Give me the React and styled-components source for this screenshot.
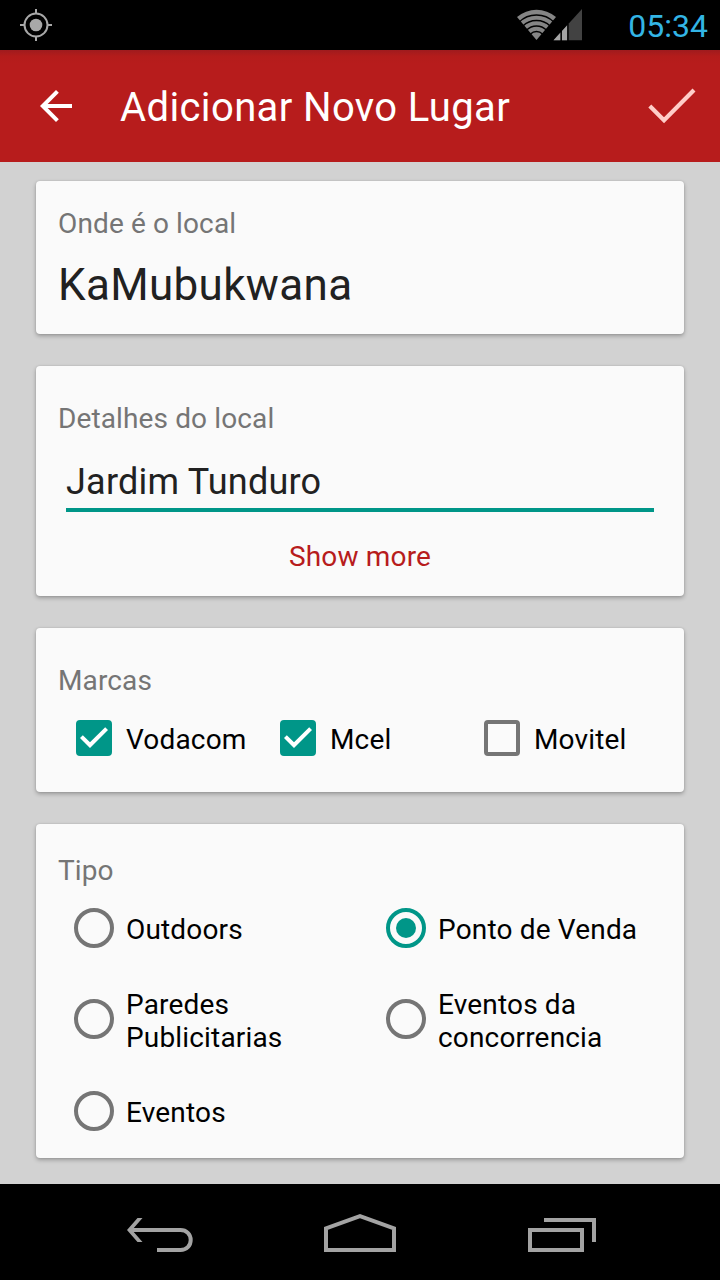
import React, { useState } from 'react';
import styled, { createGlobalStyle } from 'styled-components';

const GlobalStyle = createGlobalStyle`
  * { box-sizing: border-box; }
  body { margin: 0; background: #000; font-family: Roboto, "Liberation Sans", sans-serif; }
`;

const Screen = styled.div`
  width: 720px;
  height: 1280px;
  display: flex;
  flex-direction: column;
  overflow: hidden;
  background: #d2d2d2;
`;

const StatusBar = styled.header`
  height: 50px;
  flex: none;
  display: flex;
  align-items: flex-start;
  padding: 0 12px 0 18px;
  background: #000;
`;

const StatusIcons = styled.div`
  display: flex;
  margin-left: auto;
`;

const Clock = styled.time`
  width: 126px;
  padding-top: 7px;
  text-align: right;
  font-size: 32px;
  line-height: 38px;
  color: #33b5e5;
`;

const AppBar = styled.div`
  height: 112px;
  flex: none;
  display: flex;
  align-items: center;
  padding: 0 24px 0 32px;
  background: linear-gradient(#9f1b1e, #b31c1b 6px, #b71c1c 14px);
`;

const Title = styled.h1`
  flex: 1;
  margin: 2px 0 0 40px;
  font-size: 40px;
  font-weight: 400;
  line-height: 47px;
  letter-spacing: 0.38px;
  color: #fff;
`;

const IconButton = styled.button`
  display: flex;
  padding: 0;
  border: 0;
  background: none;
`;

const Content = styled.main`
  flex: 1;
  display: flex;
  flex-direction: column;
  gap: 32px;
  padding: 19px 36px 26px;
`;

const Card = styled.section`
  height: ${(p) => p.$height}px;
  flex: none;
  padding: ${(p) => p.$top}px 22px 0;
  border-radius: 4px;
  background: #fafafa;
  box-shadow: 0 2px 4px rgba(0, 0, 0, 0.28), 0 0 2px rgba(0, 0, 0, 0.12);
`;

const Label = styled.h2`
  margin: 0;
  font-size: 28px;
  font-weight: 400;
  line-height: 33px;
  letter-spacing: 0.12px;
  color: #757575;
`;

const PlaceName = styled.p`
  margin: 19px 0 0;
  font-size: 44px;
  line-height: 52px;
  letter-spacing: 0.34px;
  color: #212121;
`;

const TextField = styled.input`
  display: block;
  width: 588px;
  height: 54px;
  margin: 23px 8px 0;
  padding: 0 0 2px;
  border: 0;
  border-bottom: 4px solid #009688;
  border-radius: 0;
  outline: 0;
  background: none;
  font: 400 36px/42px Roboto, "Liberation Sans", sans-serif;
  letter-spacing: 0.22px;
  color: #212121;
`;

const MoreButton = styled.button`
  display: block;
  margin: 28px auto 0;
  padding: 0;
  border: 0;
  background: none;
  font: 400 28px/33px Roboto, "Liberation Sans", sans-serif;
  letter-spacing: 0.18px;
  color: #b71c1c;
`;

const CheckRow = styled.div`
  display: grid;
  grid-template-columns: repeat(3, 204px);
  margin: 23px -12px 0 18px;
`;

const Option = styled.label`
  display: flex;
  align-items: center;
  gap: ${(p) => p.$gap}px;
`;

const OptionText = styled.span`
  padding-top: ${(p) => p.$offset}px;
  font-size: 28px;
  line-height: 33px;
  letter-spacing: 0.17px;
  white-space: pre-line;
  color: #000;
`;

const CheckBox = styled.span`
  width: 36px;
  height: 36px;
  flex: none;
  border: 4px solid ${(p) => (p.$on ? '#009688' : '#757575')};
  border-radius: 4px;
  background: ${(p) => (p.$on ? '#009688' : 'transparent')};

  svg { display: block; margin: -4px; }
`;

const RadioGrid = styled.div`
  display: grid;
  grid-template-columns: 312px 270px;
  grid-template-rows: 80px 102px 82px;
  margin: 1px 0 0 16px;
`;

const Radio = styled.span`
  width: 40px;
  height: 40px;
  flex: none;
  display: grid;
  place-items: center;
  border: 4px solid ${(p) => (p.$on ? '#009688' : '#757575')};
  border-radius: 50%;
`;

const RadioDot = styled.span`
  width: 20px;
  height: 20px;
  border-radius: 50%;
  background: #009688;
`;

const NavBar = styled.nav`
  height: 96px;
  flex: none;
  display: flex;
  align-items: center;
  justify-content: space-between;
  padding: 8px 122px 0 124px;
  background: #000;
`;

const GpsIcon = () => (
  <svg width="36" height="50" viewBox="0 0 36 50" fill="none" stroke="#a8a8a8" strokeWidth="2">
    <circle cx="18" cy="25" r="11.5" />
    <path d="M18 9v5M18 36v5M2 25h5M29 25h5" />
    <circle cx="18" cy="25" r="6.3" fill="#a8a8a8" stroke="none" />
  </svg>
);

const WifiIcon = () => (
  <svg width="36" height="50" viewBox="516 0 36 50" overflow="visible">
    <path d="M536.5 40L517 17A30.2 30.2 0 0 1 556 17Z" fill="#858585" />
    <g fill="none" stroke="#000" strokeWidth="1.4">
      <path d="M518.9 22.3A25 25 0 0 1 554.1 22.3" />
      <path d="M522.7 26.2A19.5 19.5 0 0 1 550.3 26.2" />
      <path d="M526.6 30.1A14 14 0 0 1 546.4 30.1" />
      <path d="M530.5 34A8.5 8.5 0 0 1 542.5 34" />
    </g>
  </svg>
);

const SignalIcon = () => (
  <svg width="30" height="50" viewBox="552 0 30 50">
    <path d="M553.5 40.3L582 9v31.3Z" fill="#424242" />
    <path d="M553.5 40.3L560.5 32.6v7.7ZM562 31v9.3h5V25.5Z" fill="#a6a6a6" />
    <path d="M561.2 30v11M568 24v17" stroke="#000" strokeWidth="1.3" />
  </svg>
);

const BackArrow = () => (
  <svg width="48" height="48" viewBox="0 0 24 24" fill="#fff">
    <path d="M20 11H7.83l5.59-5.59L12 4l-8 8 8 8 1.41-1.41L7.83 13H20z" />
  </svg>
);

const DoneIcon = () => (
  <svg width="48" height="48" viewBox="0 0 48 48" fill="none" stroke="#ffcdc8" strokeWidth="4.2">
    <path d="M1.8 24L16 38.2L46 8" />
  </svg>
);

const CheckMark = () => (
  <svg width="36" height="36" viewBox="3 3 18 18" fill="#fff">
    <path d="M10 17l-5-5 1.41-1.41L10 14.17l7.59-7.59L19 8z" />
  </svg>
);

const NavBack = () => (
  <svg width="72" height="48" viewBox="124 1212 72 48" fill="none" stroke="#a3a3a3" strokeWidth="4">
    <path d="M130 1230h50.5c6 0 10.2 4.2 10.2 10s-4.2 10-10.2 10H157" />
    <path d="M127 1230L137.5 1218H142.5L132 1230L142.5 1242H137.5Z" fill="#a3a3a3" stroke="none" />
  </svg>
);

const NavHome = () => (
  <svg width="76" height="48" viewBox="322 1212 76 48" fill="none" stroke="#a3a3a3" strokeWidth="4">
    <path d="M326 1250V1228.3L360 1216.2L394 1228.3V1250Z" />
  </svg>
);

const NavRecent = () => (
  <svg width="74" height="48" viewBox="524 1212 74 48" fill="none" stroke="#a3a3a3" strokeWidth="4">
    <path d="M530 1230h52v20h-52zM544 1220h50v22" />
  </svg>
);

const TYPES = [
  'Outdoors',
  'Ponto de Venda',
  'Paredes\nPublicitarias',
  'Eventos da\nconcorrencia',
  'Eventos',
];

export default function App() {
  const [details, setDetails] = useState('Jardim Tunduro');
  const [brands, setBrands] = useState({ Vodacom: true, Mcel: true, Movitel: false });
  const [type, setType] = useState('Ponto de Venda');

  return (
    <>
      <GlobalStyle />
      <Screen>
        <StatusBar>
          <GpsIcon />
          <StatusIcons>
            <WifiIcon />
            <SignalIcon />
          </StatusIcons>
          <Clock>05:34</Clock>
        </StatusBar>
        <AppBar>
          <IconButton aria-label="Voltar"><BackArrow /></IconButton>
          <Title>Adicionar Novo Lugar</Title>
          <IconButton aria-label="Guardar"><DoneIcon /></IconButton>
        </AppBar>
        <Content>
          <Card $height={153} $top={26}>
            <Label>Onde é o local</Label>
            <PlaceName>KaMubukwana</PlaceName>
          </Card>
          <Card $height={230} $top={36}>
            <Label>Detalhes do local</Label>
            <TextField value={details} onChange={(e) => setDetails(e.target.value)} />
            <MoreButton>Show more</MoreButton>
          </Card>
          <Card $height={164} $top={36}>
            <Label>Marcas</Label>
            <CheckRow>
              {Object.entries(brands).map(([name, on]) => (
                <Option key={name} $gap={14} onClick={() => setBrands({ ...brands, [name]: !on })}>
                  <CheckBox $on={on}>{on && <CheckMark />}</CheckBox>
                  <OptionText $offset={3}>{name}</OptionText>
                </Option>
              ))}
            </CheckRow>
          </Card>
          <Card $height={334} $top={30}>
            <Label>Tipo</Label>
            <RadioGrid>
              {TYPES.map((name) => (
                <Option key={name} $gap={12} onClick={() => setType(name)}>
                  <Radio $on={type === name}>{type === name && <RadioDot />}</Radio>
                  <OptionText $offset={name.includes('\n') ? 4 : 3}>{name}</OptionText>
                </Option>
              ))}
            </RadioGrid>
          </Card>
        </Content>
        <NavBar>
          <IconButton aria-label="Back"><NavBack /></IconButton>
          <IconButton aria-label="Home"><NavHome /></IconButton>
          <IconButton aria-label="Recent apps"><NavRecent /></IconButton>
        </NavBar>
      </Screen>
    </>
  );
}
